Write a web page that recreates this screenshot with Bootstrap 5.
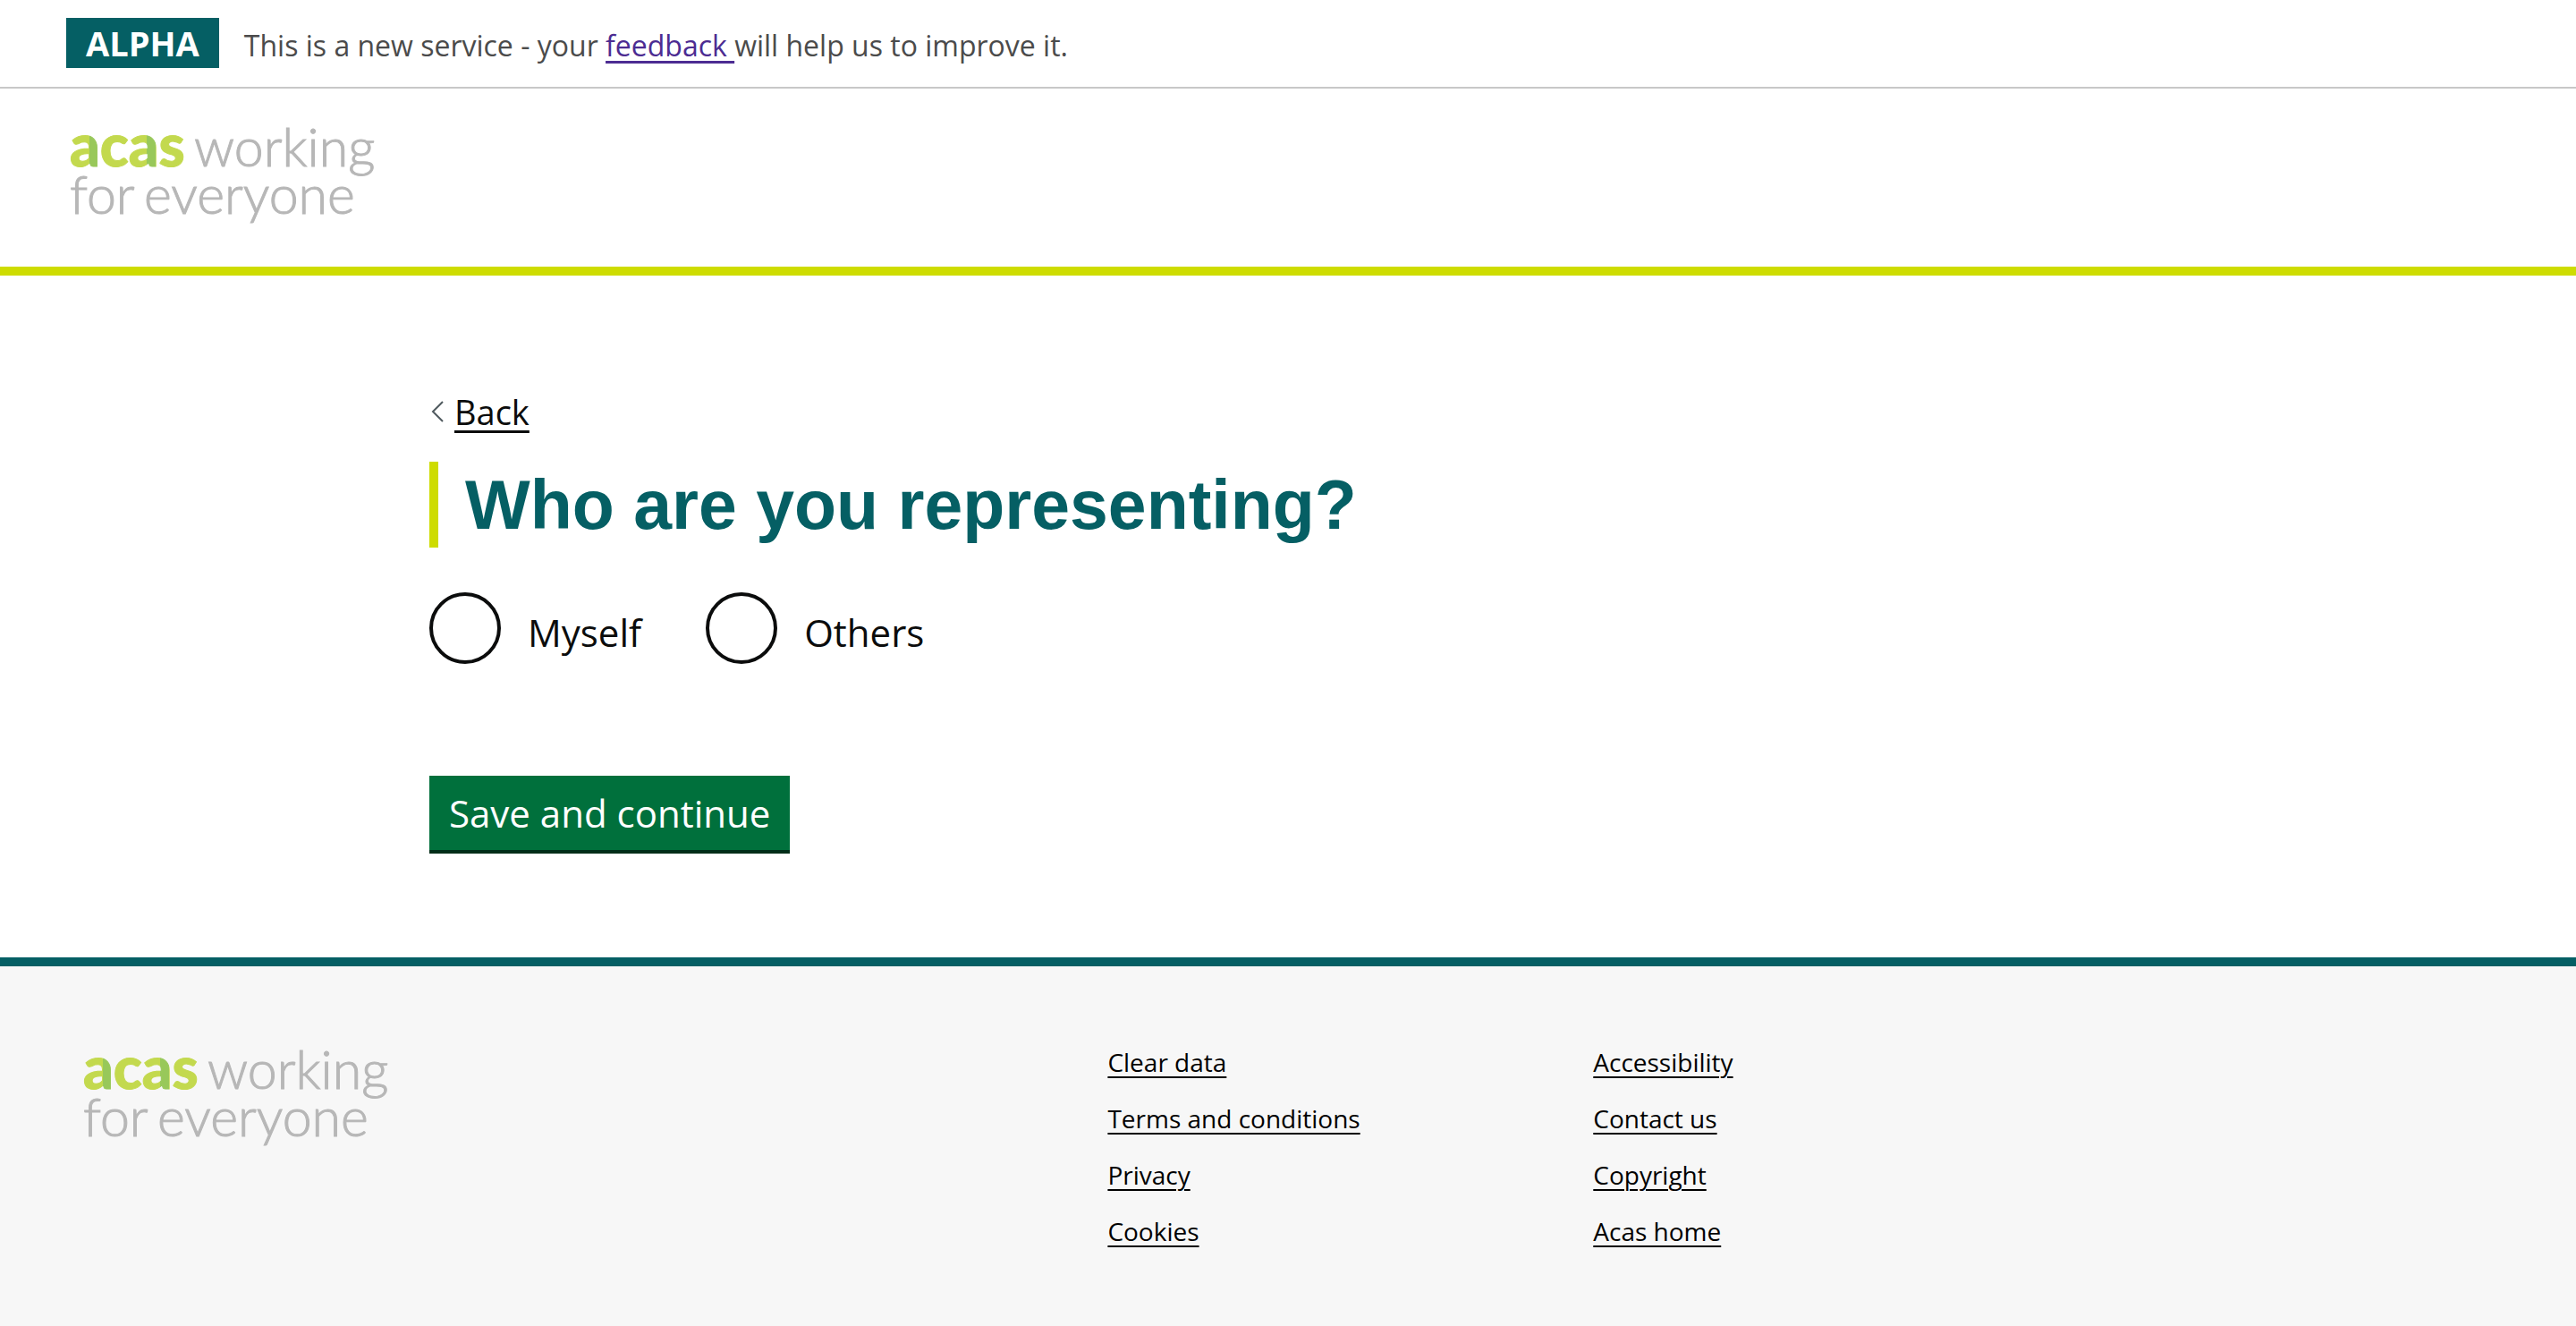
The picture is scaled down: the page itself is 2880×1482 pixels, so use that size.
<!DOCTYPE html>
<html lang="en">
<head>
<meta charset="utf-8">
<meta name="viewport" content="width=device-width, initial-scale=1">
<title>Who are you representing? - Acas</title>
<link href="https://cdn.jsdelivr.net/npm/bootstrap@5.3.0/dist/css/bootstrap.min.css" rel="stylesheet">
<style>
:root { --acas-teal: #055f64; --acas-lime: #cedc00; --ink: #0b0c0c; }
body { font-family: "Open Sans", "Noto Sans", sans-serif; color: var(--ink); background: #fff; }
a { text-underline-offset: 6px; text-decoration-thickness: 2px; }
.phase-banner { padding: 20px 74px 18px; border-bottom: 2px solid #c8c8c8; font-size: 32px; line-height: 56px; color: #4b4b4b; gap: 28px; }
.phase-tag { padding: 0 22px; background: var(--acas-teal); color: #fff; font-size: 38px; font-weight: 700; }
.phase-banner a { color: #4c2c92; text-underline-offset: 5px; text-decoration-thickness: 3px; }
.site-header { padding: 44px 78px 47px; border-bottom: 10px solid var(--acas-lime); }
.brand-link { width: 340px; }
.acas-logo { display: block; width: 340px; height: 108px; overflow: visible; font-family: Lato, "Open Sans", sans-serif; }
.logo-strong { font-size: 66px; font-weight: 900; fill: url(#limeBand); stroke: url(#limeBand); stroke-width: 1px; }
.logo-thin { font-size: 59px; font-weight: 300; fill: #b7b7b7; stroke: #b7b7b7; stroke-width: 1px; }
.page-width { max-width: 1920px; padding-top: 126px; padding-bottom: 116px; }
.back-link { font-size: 38px; line-height: 52px; color: var(--ink); gap: 11px; margin-bottom: 30px; }
.back-link svg { width: 15px; height: 24px; margin-left: 2px; }
.page-title { border-left: 10px solid var(--acas-lime); padding-left: 30px; margin-bottom: 50px; font-family: "Liberation Sans", Arial, sans-serif; font-size: 77px; line-height: 96px; font-weight: 700; color: var(--acas-teal); }
.choice-list { gap: 72px; margin-bottom: 115px; }
.choice { font-size: 42px; line-height: 90px; }
.choice input { appearance: none; width: 80px; height: 80px; margin: 0; border: 4px solid var(--ink); border-radius: 50%; background: #fff; }
.choice input:checked { background: radial-gradient(circle, var(--ink) 20px, #fff 21px); }
.choice label { padding-left: 30px; }
.btn-save { padding: 0 22px; border: 0; border-radius: 0; background: #00703c; border-bottom: 4px solid #002d18; color: #fff; font-size: 42px; line-height: 83px; }
.btn-save:hover { background: #005a30; color: #fff; border-color: #002d18; }
.site-footer { border-top: 10px solid var(--acas-teal); background: #f7f7f7; padding: 88px 0 87px; }
.foot-brand { width: 43%; padding: 6px 0 0 93px; }
.foot-links { width: 18.85%; gap: 25px; font-size: 28px; line-height: 38px; }
.foot-links a { color: #000; text-underline-offset: 5px; }
</style>
</head>
<body>
<div class="phase-banner d-flex align-items-baseline flex-wrap">
  <strong class="phase-tag">ALPHA</strong>
  <span>This is a new service - your <a href="#">feedback </a>will help us to improve it.</span>
</div>

<header class="site-header">
  <a href="#" aria-label="Acas home" class="brand-link d-block">
    <svg class="acas-logo" viewBox="0 0 340 108">
      <defs>
        <linearGradient id="limeBand" gradientUnits="userSpaceOnUse" x1="0" y1="0" x2="130" y2="0">
          <stop offset="0.17" stop-color="#c3d94e"/><stop offset="0.17" stop-color="#98c85a"/>
          <stop offset="0.26" stop-color="#98c85a"/><stop offset="0.26" stop-color="#c3d94e"/>
          <stop offset="0.66" stop-color="#c3d94e"/><stop offset="0.66" stop-color="#98c85a"/>
          <stop offset="0.74" stop-color="#98c85a"/><stop offset="0.74" stop-color="#c3d94e"/>
        </linearGradient>
      </defs>
      <text class="logo-strong" x="0" y="43">acas</text>
      <text class="logo-thin" x="139" y="43">working</text>
      <text class="logo-thin" x="0" y="96">for</text>
      <text class="logo-thin" x="83" y="96">everyone</text>
    </svg>
  </a>
</header>

<main class="page-width container-fluid px-0">
  <a href="#" class="back-link d-flex align-items-center text-decoration-none">
    <svg viewBox="0 0 15 24" aria-hidden="true"><path d="M13 1 2 12 13 23" fill="none" stroke="#505a5f" stroke-width="2"/></svg>
    <span class="text-decoration-underline">Back</span>
  </a>
  <form>
    <h1 class="page-title" id="question">Who are you representing?</h1>
    <div class="choice-list d-flex flex-wrap" role="radiogroup" aria-labelledby="question">
      <div class="choice d-flex align-items-start"><input type="radio" name="who" id="who-myself"><label for="who-myself">Myself</label></div>
      <div class="choice d-flex align-items-start"><input type="radio" name="who" id="who-others"><label for="who-others">Others</label></div>
    </div>
    <button type="button" class="btn btn-save d-block">Save and continue</button>
  </form>
</main>

<footer class="site-footer d-flex align-items-start">
  <div class="foot-brand">
    <svg class="acas-logo" viewBox="0 0 340 108" role="img" aria-label="Acas working for everyone">
      <text class="logo-strong" x="0" y="43">acas</text>
      <text class="logo-thin" x="139" y="43">working</text>
      <text class="logo-thin" x="0" y="96">for</text>
      <text class="logo-thin" x="83" y="96">everyone</text>
    </svg>
  </div>
  <ul class="foot-links list-unstyled d-flex flex-column mb-0">
    <li><a href="#">Clear data</a></li>
    <li><a href="#">Terms and conditions</a></li>
    <li><a href="#">Privacy</a></li>
    <li><a href="#">Cookies</a></li>
  </ul>
  <ul class="foot-links list-unstyled d-flex flex-column mb-0">
    <li><a href="#">Accessibility</a></li>
    <li><a href="#">Contact us</a></li>
    <li><a href="#">Copyright</a></li>
    <li><a href="#">Acas home</a></li>
  </ul>
</footer>
<script src="https://cdn.jsdelivr.net/npm/bootstrap@5.3.0/dist/js/bootstrap.bundle.min.js"></script>
</body>
</html>
